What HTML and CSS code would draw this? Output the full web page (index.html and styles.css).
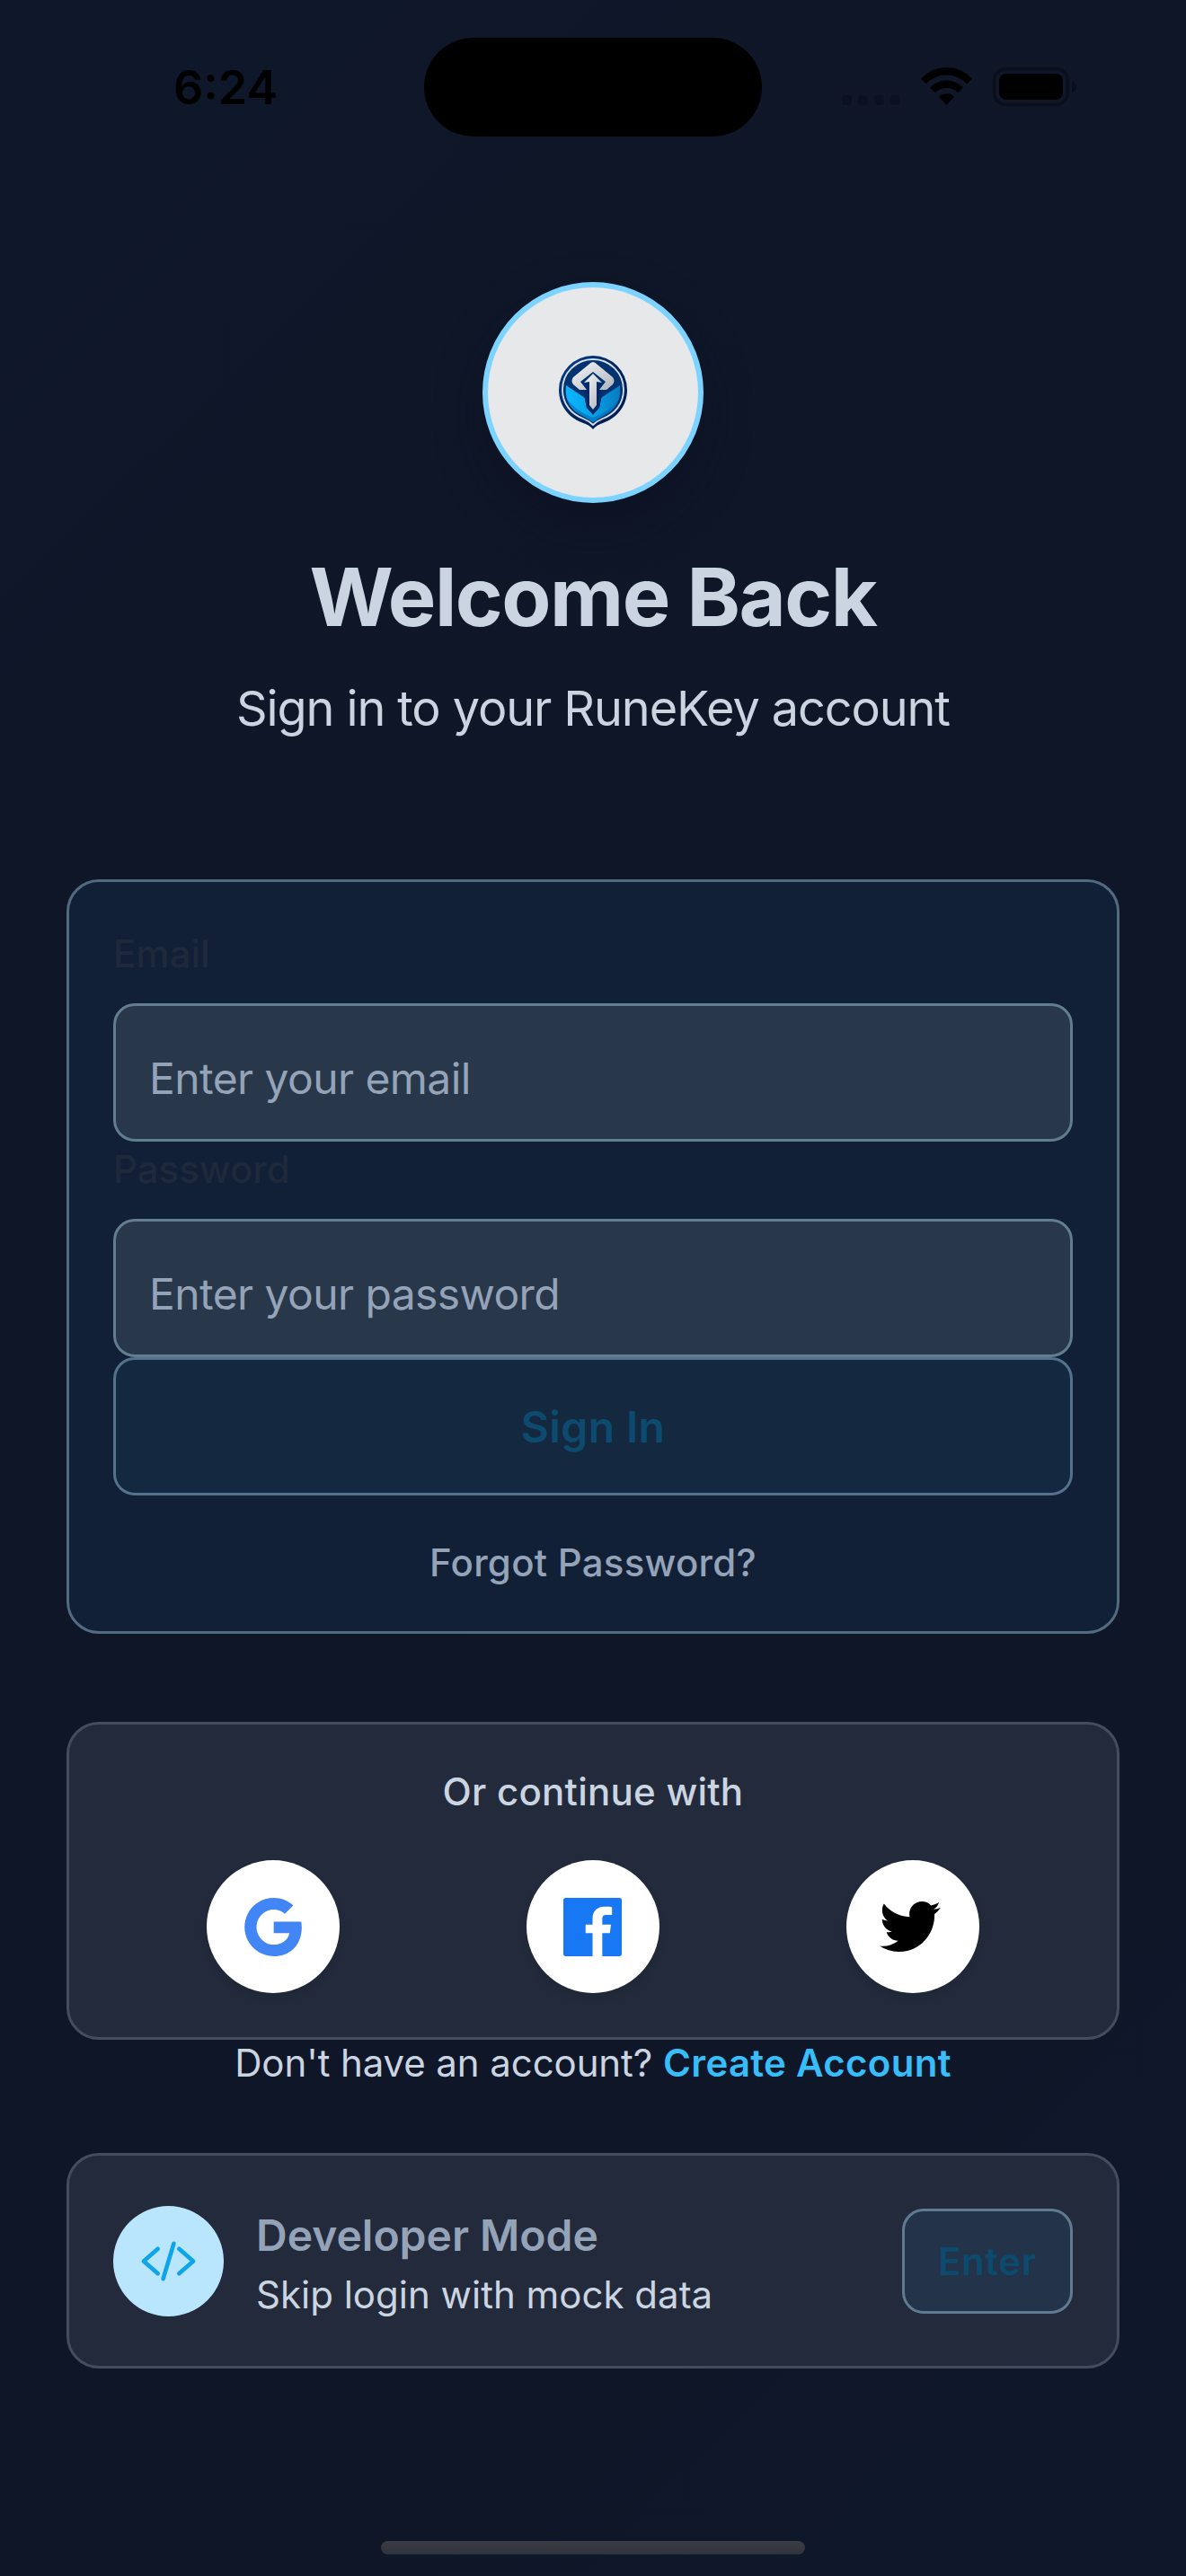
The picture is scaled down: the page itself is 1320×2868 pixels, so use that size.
FILE: index.html
```html
<!DOCTYPE html>
<html lang="en">
<head>
<meta charset="utf-8">
<title>RuneKey – Sign In</title>
<link rel="stylesheet" href="styles.css">
</head>
<body>
<div class="screen">
  <header class="status">
    <span class="status-time">6:24</span>
    <span class="island"></span>
    <span class="status-icons">
      <svg class="signal" viewBox="0 0 65 11"><g fill="#0c1122"><rect width="11" height="11" rx="4"/><rect x="18" width="11" height="11" rx="4"/><rect x="36" width="11" height="11" rx="4"/><rect x="54" width="11" height="11" rx="4"/></g></svg>
      <svg class="wifi" viewBox="0 0 57 42"><path d="M0 12.5Q12 0 28.500 0Q45 0 57 12.500L51.500 18.300Q41.500 8.500 28.500 8.500Q15.500 8.500 5.500 18.300ZM10 22.500Q18 14.500 28.500 14.500Q39 14.500 47 22.500L41.500 28.300Q36 23 28.500 23Q21 23 15.500 28.300ZM20 32.700Q24 29 28.500 29Q33 29 37 32.700L28.500 42Z"/></svg>
      <svg class="battery" viewBox="0 0 93 43"><rect x="1.750" y="1.750" width="81.500" height="39.500" rx="12" fill="none" stroke="#0a0f1b" stroke-width="3.500"/><rect x="7" y="7" width="71" height="29" rx="8"/><path d="M88 15Q93 17 93 21.500Q93 26 88 28Z" fill="#0a0f1b"/></svg>
    </span>
  </header>

  <main class="content">
    <section class="brand">
      <div class="logo">
        <svg class="emblem" viewBox="0 0 76 82">
          <defs>
            <linearGradient id="ring" x1="0" y1="0" x2="1" y2="1"><stop offset="0" stop-color="#04408a"/><stop offset=".5" stop-color="#03245f"/><stop offset="1" stop-color="#021a4c"/></linearGradient>
            <linearGradient id="steel" x1="0" y1="0" x2="1" y2="1"><stop offset="0" stop-color="#f7f8fa"/><stop offset="1" stop-color="#aeb3ba"/></linearGradient>
            <linearGradient id="water" x1="0" y1="0" x2="1" y2="0"><stop offset="0" stop-color="#0bb6fb"/><stop offset=".5" stop-color="#08a2e8"/><stop offset="1" stop-color="#077ac0"/></linearGradient>
          </defs>
          <path d="M38 0A38 38 0 0 1 76 38C76 56 65 69 49 75Q42 77 38 82Q34 77 27 75C11 69 0 56 0 38A38 38 0 0 1 38 0Z" fill="url(#ring)"/>
          <path d="M38 4A34 34 0 0 1 72 38C72 54 62 65 49 70Q42 73 38 77Q34 73 27 70C14 65 4 54 4 38A34 34 0 0 1 38 4Z" fill="#033271" stroke="#d9dfe9" stroke-width="1.800"/>
          <path d="M8 33L29 47L31 58L38 66L45 58L47 47L68 33C70 50 62 61 51 66L38 74L25 66C14 61 6 50 8 33Z" fill="url(#water)"/>
          <path d="M9 48Q18 61 38 69Q58 61 67 48Q62 61 51 66L38 74L25 66Q14 61 9 48Z" fill="#0668b0" opacity=".6"/>
          <path d="M28 44L31 58L38 65L45 58L48 44L46 28H30Z" fill="#032a68"/>
          <path d="M38 7Q40 7 43 10L60 24Q63 28 60 32L53 38H45L52 29L38 18L24 29L31 38H23L16 32Q13 28 16 24L33 10Q36 7 38 7Z" fill="url(#steel)"/>
          <path d="M38 20L48 30L42 29V55L38 60L34 55V29L28 30Z" fill="url(#steel)"/>
        </svg>
      </div>
      <h1 class="title">Welcome Back</h1>
      <p class="subtitle">Sign in to your RuneKey account</p>
    </section>

    <form class="card form-card">
      <label class="label">Email</label>
      <div class="field">Enter your email</div>
      <label class="label">Password</label>
      <div class="field">Enter your password</div>
      <button type="button" class="signin">Sign In</button>
      <a class="forgot">Forgot Password?</a>
    </form>

    <section class="card social-card">
      <p class="social-title">Or continue with</p>
      <div class="social-row">
        <span class="social"><svg class="google" viewBox="136 128 752 768"><path fill="#4285f4" d="M881 442.400H519.700v148.500h206.400c-8.900 48-35.900 88.600-76.600 115.800-34.400 23-78.300 36.600-129.900 36.600-99.900 0-184.400-67.500-214.600-158.200-7.600-23-12-47.600-12-72.900s4.400-49.900 12-72.900c30.300-90.600 114.800-158.100 214.700-158.100 56.300 0 106.800 19.400 146.600 57.400l110-110.100c-66.500-62-153.200-100-256.600-100-149.900 0-279.600 86-342.700 211.400-26 51.800-40.800 110.400-40.800 172.400S151 632.800 177 684.600C240.100 810 369.800 896 519.700 896c103.600 0 190.400-34.400 253.800-93 72.500-66.800 114.400-165.200 114.400-282.100 0-27.200-2.400-53.300-6.900-78.500z"/></svg></span>
        <span class="social"><svg class="facebook" viewBox="64 64 384 384"><path fill="#1877f2" d="M433 64H79C70 64 64 70 64 79v354c0 9 6 15 15 15H256V296h-45.900v-56H256v-41.400c0-49.600 34.400-76.600 78.700-76.600 21.200 0 44 1.600 49.300 2.300v51.800h-35.300c-24.100 0-28.700 11.400-28.700 28.200V240h57.400l-7.500 56H320v152h113c9 0 15-6 15-15V79c0-9-6-15-15-15z"/></svg></span>
        <span class="social"><svg class="twitter" viewBox="16 64 480 384" preserveAspectRatio="none"><path d="M496 109.500a201.800 201.800 0 01-56.550 15.300 97.510 97.510 0 0043.330-53.600 197.740 197.740 0 01-62.560 23.500A99.140 99.140 0 00348.310 64c-54.420 0-98.460 43.400-98.460 96.900a93.210 93.210 0 002.540 22.100 280.700 280.700 0 01-203-101.300A95.690 95.690 0 0036 130.400c0 33.600 17.530 63.300 44 80.700A97.500 97.500 0 0135.220 199v1.200c0 47 34 86.100 79 95a100.760 100.760 0 01-25.940 3.400 94.380 94.380 0 01-18.510-1.800c12.510 38.500 48.920 66.500 92.050 67.300A199.590 199.590 0 0139.500 405.600a203 203 0 01-23.500-1.400A278.680 278.680 0 00166.740 448c181.360 0 280.440-147.700 280.440-275.800 0-4.200-.11-8.400-.31-12.500A198.480 198.480 0 00496 109.500z"/></svg></span>
      </div>
    </section>

    <p class="signup"><span>Don't have an account?</span><a>Create Account</a></p>

    <section class="card dev-card">
      <span class="dev-icon"><svg viewBox="0 0 512 512" fill="none" stroke="#0ea5e9" stroke-width="38" stroke-linecap="round" stroke-linejoin="round"><path d="M160 368L32 256l128-112M352 368l128-112-128-112M304 96l-96 320"/></svg></span>
      <div class="dev-text">
        <h2 class="dev-title">Developer Mode</h2>
        <p class="dev-sub">Skip login with mock data</p>
      </div>
      <button type="button" class="enter">Enter</button>
    </section>
  </main>
  <div class="home"></div>
</div>
</body>
</html>
```
FILE: styles.css
```css
* { box-sizing: border-box; }

body {
  margin: 0;
  background: #0e1628;
  font-family: Inter, "Liberation Sans", sans-serif;
}

h1, h2, p { margin: 0; }

button { font-family: inherit; padding: 0; }

svg { display: block; }

.screen {
  display: flex;
  flex-direction: column;
  align-items: center;
  width: 1320px;
  height: 2868px;
  overflow: hidden;
  background: linear-gradient(135deg, #0f172a 0%, #0e1627 50%, #0f172a 100%);
}

/* Status bar */
.status {
  display: grid;
  grid-template-columns: 472px 376px 472px;
  width: 100%;
  height: 152px;
  padding-top: 42px;
}

.status-time {
  padding: 24px 0 0 193px;
  font-size: 52px;
  line-height: 64px;
  font-weight: 600;
}

.island {
  height: 110px;
  border-radius: 55px;
  background: #000;
}

.status-icons {
  display: flex;
  align-items: flex-start;
  padding: 33px 0 0 89px;
}

.signal { width: 65px; height: 11px; margin-top: 31px; }
.wifi { width: 57px; height: 42px; margin-left: 23px; }
.battery { width: 93px; height: 43px; margin-left: 23px; }

.content {
  display: flex;
  flex-direction: column;
  width: 1172px;
  height: 2677px;
}

/* Brand header */
.brand {
  display: flex;
  flex-direction: column;
  align-items: center;
  height: 827px;
  padding-top: 162px;
}

.logo {
  display: flex;
  align-items: center;
  justify-content: center;
  width: 246px;
  height: 246px;
  border: 6px solid #7dd3ff;
  border-radius: 50%;
  background: #e6e8ea;
  box-shadow: 0 24px 48px rgba(14, 15, 32, .5);
}

.emblem { width: 76px; height: 82px; }

.title {
  margin-top: 49px;
  font-size: 90px;
  line-height: 112px;
  font-weight: 700;
  letter-spacing: -1.5px;
  color: #cbd5e1;
}

.subtitle {
  margin-top: 32px;
  font-size: 54px;
  line-height: 72px;
  letter-spacing: -1.1px;
  color: #cbd5e1;
}

.card {
  flex: none;
  border: 3px solid #454c5d;
  border-radius: 36px;
  background: #222a3b;
}

/* Sign-in form */
.form-card {
  display: flex;
  flex-direction: column;
  height: 840px;
  padding: 49px 49px 0;
  border-color: #526b80;
  background: #112036;
}

.label {
  height: 86px;
  font-size: 42px;
  line-height: 62px;
  font-weight: 500;
  color: #1e293b;
}

.field {
  height: 154px;
  padding: 14px 0 0 37px;
  border: 3px solid #627d90;
  border-radius: 24px;
  background: #283749;
  font-size: 48px;
  line-height: 134px;
  letter-spacing: -.58px;
  color: #94a3b8;
}

.signin {
  height: 154px;
  border: 3px solid #54728b;
  border-radius: 24px;
  background: #14283f;
  font-size: 48px;
  font-weight: 600;
  letter-spacing: .4px;
  color: #0c4a6e;
}

.forgot {
  margin-top: 45px;
  font-size: 42px;
  line-height: 60px;
  font-weight: 500;
  letter-spacing: .25px;
  text-align: center;
  color: #94a3b8;
}

/* Social sign-in */
.social-card {
  height: 354px;
  margin-top: 98px;
  padding: 44px 49px 0;
}

.social-title {
  font-size: 42px;
  line-height: 62px;
  font-weight: 500;
  letter-spacing: .25px;
  text-align: center;
  color: #cbd5e1;
}

.social-row {
  display: flex;
  justify-content: space-around;
  margin-top: 45px;
}

.social {
  display: flex;
  align-items: center;
  justify-content: center;
  width: 148px;
  height: 148px;
  border-radius: 50%;
  background: #fff;
  box-shadow: 0 6px 12px rgba(0, 0, 0, .06);
}

.google { width: 64px; height: 65px; margin-right: 1px; }
.facebook { width: 65px; height: 65px; margin-right: 2px; }
.twitter { width: 68px; height: 56px; margin-right: 6px; }

.signup {
  display: flex;
  justify-content: center;
  gap: 12px;
  font-size: 42px;
  line-height: 52px;
  letter-spacing: -.1px;
  color: #cbd5e1;
}

.signup a {
  font-weight: 600;
  letter-spacing: .3px;
  color: #38bdf8;
}

/* Developer mode */
.dev-card {
  display: flex;
  align-items: center;
  height: 240px;
  margin-top: 74px;
  padding: 0 49px;
}

.dev-icon {
  display: flex;
  align-items: center;
  justify-content: center;
  width: 123px;
  height: 123px;
  border-radius: 50%;
  background: #bae6fd;
}

.dev-icon svg { width: 63px; height: 63px; }

.dev-text { flex: 1; padding: 3px 0 0 36px; }

.dev-title {
  font-size: 48px;
  line-height: 72px;
  font-weight: 600;
  color: #94a3b8;
}

.dev-sub {
  font-size: 42px;
  line-height: 60px;
  color: #cbd5e1;
}

.enter {
  width: 190px;
  height: 117px;
  border: 3px solid #5f7b92;
  border-radius: 24px;
  background: #22334a;
  font-size: 42px;
  font-weight: 600;
  letter-spacing: .6px;
  color: #0c4a6e;
}

.home {
  flex: none;
  width: 472px;
  height: 15px;
  border-radius: 8px;
  background: linear-gradient(#3b3c42, #30343d);
}
```
